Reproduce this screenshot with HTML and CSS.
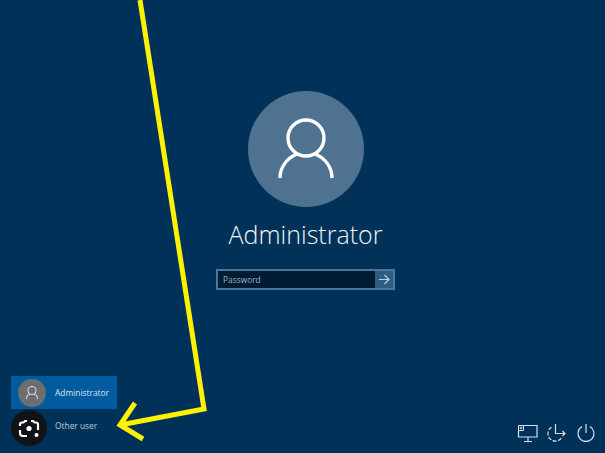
FILE: index.html
```html
<!DOCTYPE html>
<html lang="en">
<head>
    <meta charset="UTF-8">
    <meta name="viewport" content="width=device-width, initial-scale=1.0">
    <title>Sign in</title>
    <link rel="stylesheet" href="styles.css">
</head>
<body>
    <div class="screen">
        <main class="signin">
            <div class="avatar">
                <svg class="avatar-icon" viewBox="0 0 116 116" fill="none" stroke="#fff" stroke-width="3.4">
                    <circle cx="58" cy="47" r="18"/>
                    <path d="M32 87c0-11 7-20 17-24M84 87c0-11-7-20-17-24"/>
                </svg>
            </div>
            <h1 class="username">Administrator</h1>
            <form class="password">
                <span class="password-field">Password</span>
                <span class="password-submit">
                    <svg viewBox="0 0 18 17" width="18" height="17" fill="none" stroke="#c3d2de" stroke-width="1.1">
                        <path d="M4 8.500h10M9.500 4l4.500 4.500L9.500 13"/>
                    </svg>
                </span>
            </form>
        </main>

        <footer class="bottom">
            <div class="users">
                <div class="user user-active">
                    <span class="user-pic">
                        <svg viewBox="0 0 28 28" width="28" height="28" fill="none" stroke="#d8d8d8" stroke-width="1.1">
                            <circle cx="14" cy="11.500" r="4"/>
                            <path d="M8.500 20c0-2.500 1.500-4.500 3.500-5M19.500 20c0-2.500-1.500-4.500-3.500-5"/>
                        </svg>
                    </span>
                    <span class="user-name">Administrator</span>
                </div>
                <div class="user">
                    <span class="user-name other-name">Other user</span>
                </div>
            </div>
            <div class="tray">
                <svg viewBox="0 0 22 20" width="22" height="20" fill="none" stroke="#d5dfe7" stroke-width="1.2">
                    <path d="M6.500 2.500H20v11.500H1.500V7.500"/>
                    <path d="M1.500 2.500h5v5h-5zM4 3.500v3M2.500 5h3" stroke-width="1"/>
                    <path d="M11 14v4M7 18.500h8"/>
                </svg>
                <svg viewBox="0 0 21 20" width="21" height="20" fill="none" stroke="#d5dfe7" stroke-width="1.2">
                    <path d="M8.500 1v9.500h9.500M15.500 8l2.500 2.500-2.500 2.500"/>
                    <path d="M4.500 4.200a7.500 7.500 0 1 0 10.500 10" stroke-dasharray="4 1.500"/>
                </svg>
                <svg viewBox="0 0 20 20" width="20" height="20" fill="none" stroke="#d5dfe7" stroke-width="1.2">
                    <path d="M10 1v9M6 3.500a8 8 0 1 0 8 0"/>
                </svg>
            </div>
        </footer>

        <div class="lens">
            <svg viewBox="0 0 36 36" width="36" height="36" fill="none" stroke="#fff" stroke-width="2.2">
                <path d="M9 16v-1.500a2 2 0 0 1 2-2h1.500L14 11h2M27 20v-5.500a2 2 0 0 0-2-2h-1.500L22 11h-2M9 20v3a3 3 0 0 0 3 3h4"/>
                <circle cx="18" cy="18.500" r="2.600" fill="#fff" stroke="none"/>
                <circle cx="25.500" cy="25" r="2" fill="#fff" stroke="none"/>
            </svg>
        </div>

        <svg class="arrow" viewBox="0 0 605 453" fill="none" stroke="#fff200" stroke-width="5">
            <path d="M140 0l64 409-84 16"/>
            <path d="M135 403l-15 22 23 14"/>
        </svg>
    </div>
</body>
</html>
```

FILE: styles.css
```css
* {
    margin: 0;
    padding: 0;
    box-sizing: border-box;
}

body {
    font-family: 'Open Sans', 'Noto Sans', sans-serif;
    background-color: #003259;
    color: white;
    overflow: hidden;
}

.screen {
    position: relative;
    width: 605px;
    height: 453px;
    display: flex;
    flex-direction: column;
    justify-content: space-between;
}

.signin {
    display: flex;
    flex-direction: column;
    align-items: center;
    padding-top: 91px;
    padding-left: 6px;
}

.avatar {
    width: 116px;
    height: 116px;
    border-radius: 50%;
    background-color: #4f7291;
}

.avatar-icon {
    display: block;
    width: 116px;
    height: 116px;
}

.username {
    margin-top: 7px;
    font-size: 25px;
    line-height: 40px;
    font-weight: 300;
    color: #f0f4f7;
}

.password {
    display: flex;
    width: 179px;
    height: 21px;
    margin-top: 15px;
    border: 2px solid #4d7696;
    background-color: #001c35;
}

.password-field {
    flex: 1;
    padding-left: 5px;
    font-size: 8.400px;
    line-height: 17px;
    color: #a3b1bd;
}

.password-submit {
    display: flex;
    width: 18px;
    background-color: #2d5d83;
}

.bottom {
    display: flex;
    justify-content: space-between;
    align-items: flex-end;
    padding: 0 9px 12px 11px;
}

.users {
    width: 106px;
    margin-bottom: -1px;
}

.user {
    display: flex;
    align-items: center;
    height: 33px;
}

.user-active {
    background-color: #005a9e;
}

.user-pic {
    display: block;
    width: 28px;
    height: 28px;
    margin-left: 7px;
    border-radius: 50%;
    background-color: #6c6f72;
}

.user-name {
    margin-left: 9px;
    font-size: 8.400px;
    color: #dce6ef;
}

.other-name {
    margin-left: 44px;
    color: #bccad6;
}

.tray {
    display: flex;
    gap: 8px;
    margin-bottom: -2px;
}

/* screenshot overlays */
.lens {
    position: absolute;
    left: 11px;
    top: 410px;
    width: 36px;
    height: 36px;
    border-radius: 50%;
    background-color: #101417;
}

.arrow {
    position: absolute;
    left: 0;
    top: 0;
    width: 605px;
    height: 453px;
}
```
